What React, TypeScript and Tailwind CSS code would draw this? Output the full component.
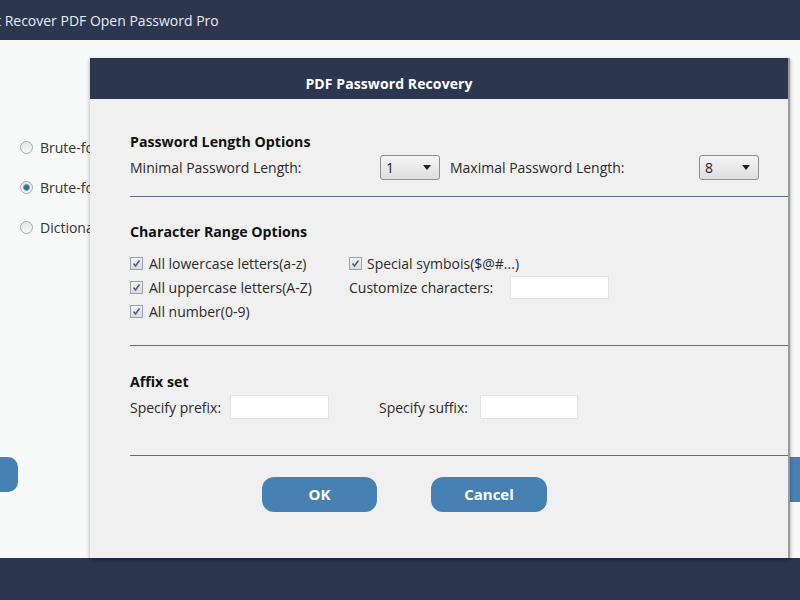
import React from 'react';

const font = { fontFamily: '"Open Sans", "Noto Sans", sans-serif' };

const Check = () => (
  <span className="w-[13px] h-[13px] border border-[#9aa3ad] bg-gradient-to-b from-[#f4f4f4] to-[#dcdcdc] flex items-center justify-center shrink-0">
    <svg width="9" height="9" viewBox="0 0 9 9">
      <path d="M1.5 4.5 L3.5 7 L7.5 1.5" fill="none" stroke="#4a5d8a" strokeWidth="1.6" />
    </svg>
  </span>
);

const Radio = ({ on }: { on?: boolean }) => (
  <span className="w-[13px] h-[13px] rounded-full border border-[#a6a6a6] bg-gradient-to-b from-[#e6e6e6] to-[#f9f9f9] flex items-center justify-center shrink-0">
    {on && <span className="w-[7px] h-[7px] rounded-full bg-[#2f6f9f] border border-[#5aa0cc]" />}
  </span>
);

const Select = ({ value }: { value: string }) => (
  <div className="w-[60px] h-[25px] rounded-[3px] border border-[#8f8f8f] bg-gradient-to-b from-[#f5f5f5] to-[#dedede] flex items-center justify-between pl-[5px] pr-[8px] text-[14px] text-[#222]">
    <span>{value}</span>
    <svg width="8" height="5" viewBox="0 0 8 5"><path d="M0 0 H8 L4 5 Z" fill="#222" /></svg>
  </div>
);

const Divider = ({ mt }: { mt: string }) => <div className={`h-px bg-[#5c6e80] ${mt}`} />;

export default function App() {
  return (
    <div className="w-[800px] h-[600px] flex flex-col overflow-hidden bg-[#f8f9f9]" style={font}>
      {/* title bar */}
      <div className="h-[40px] bg-[#2d364f] flex items-center shrink-0">
        <span className="-ml-[4px] text-[14px] text-[#e8ebf0]">t Recover PDF Open Password Pro</span>
      </div>

      <div className="relative flex-1">
        {/* background app content */}
        <div className="flex flex-col gap-[20px] pl-[20px] pt-[97px] text-[14px] text-[#333]">
          <div className="flex items-center gap-[7px] h-[20px]"><Radio /><span>Brute-force</span></div>
          <div className="flex items-center gap-[7px] h-[20px]"><Radio on /><span>Brute-force</span></div>
          <div className="flex items-center gap-[7px] h-[20px]"><Radio /><span>Dictionary</span></div>
        </div>
        <div className="absolute left-[-20px] top-[417px] w-[38px] h-[35px] rounded-[10px] bg-[#4781b4]" />
        <div className="absolute left-[790px] top-[417px] w-[30px] h-[45px] bg-[#4781b4]" />

        {/* dialog */}
        <div className="absolute left-[90px] top-[18px] w-[700px] h-[500px] bg-[#f0f0f0] border-r-2 border-[#9a9a9a] shadow-[0_2px_4px_rgba(0,0,0,0.35)] flex flex-col">
          <div className="h-[41px] bg-[#2d364f] flex items-center justify-center pt-[10px] pr-[100px] shrink-0">
            <span className="text-[14px] font-bold text-white tracking-[0.1px]">PDF Password Recovery</span>
          </div>
          <div className="pl-[40px] pt-[33px] text-[14px] text-[#2a2a2a]">
            <div className="h-[20px] leading-[20px] text-[14.2px] font-bold text-[#111]">Password Length Options</div>
            <div className="mt-[3px] h-[25px] flex items-center">
              <span className="w-[250px]">Minimal Password Length:</span>
              <Select value="1" />
              <span className="ml-[10px] w-[249px]">Maximal Password Length:</span>
              <Select value="8" />
            </div>
            <Divider mt="mt-[16px]" />

            <div className="mt-[25px] h-[20px] leading-[20px] text-[14.2px] font-bold text-[#111]">Character Range Options</div>
            <div className="mt-[9px] flex">
              <div className="w-[219px] flex flex-col">
                <div className="h-[24px] flex items-center gap-[6px]"><Check /><span>All lowercase letters(a-z)</span></div>
                <div className="h-[24px] flex items-center gap-[6px]"><Check /><span>All uppercase letters(A-Z)</span></div>
                <div className="h-[24px] flex items-center gap-[6px]"><Check /><span>All number(0-9)</span></div>
              </div>
              <div className="flex flex-col">
                <div className="h-[24px] flex items-center gap-[5px]"><Check /><span>Special symbois($@#...)</span></div>
                <div className="h-[24px] flex items-center">
                  <span className="w-[161px]">Customize characters:</span>
                  <div className="w-[99px] h-[23px] bg-white border border-[#e2e2e2]" />
                </div>
              </div>
            </div>
            <Divider mt="mt-[22px]" />

            <div className="mt-[26px] h-[20px] leading-[20px] text-[14.2px] font-bold text-[#111]">Affix set</div>
            <div className="mt-[3px] h-[24px] flex items-center">
              <span className="w-[100px]">Specify prefix:</span>
              <div className="w-[99px] h-[24px] bg-white border border-[#e2e2e2]" />
              <span className="ml-[50px] w-[101px]">Specify suffix:</span>
              <div className="w-[98px] h-[24px] bg-white border border-[#e2e2e2]" />
            </div>
            <Divider mt="mt-[36px]" />

            <div className="mt-[21px] pl-[132px] flex gap-[54px]">
              <button className="w-[115px] h-[35px] rounded-[12px] bg-[#4781b4] text-white font-bold text-[15px]">OK</button>
              <button className="w-[116px] h-[35px] rounded-[12px] bg-[#4781b4] text-white font-bold text-[15px]">Cancel</button>
            </div>
          </div>
        </div>
      </div>

      <div className="h-[42px] bg-[#2d364f] shrink-0" />
    </div>
  );
}
